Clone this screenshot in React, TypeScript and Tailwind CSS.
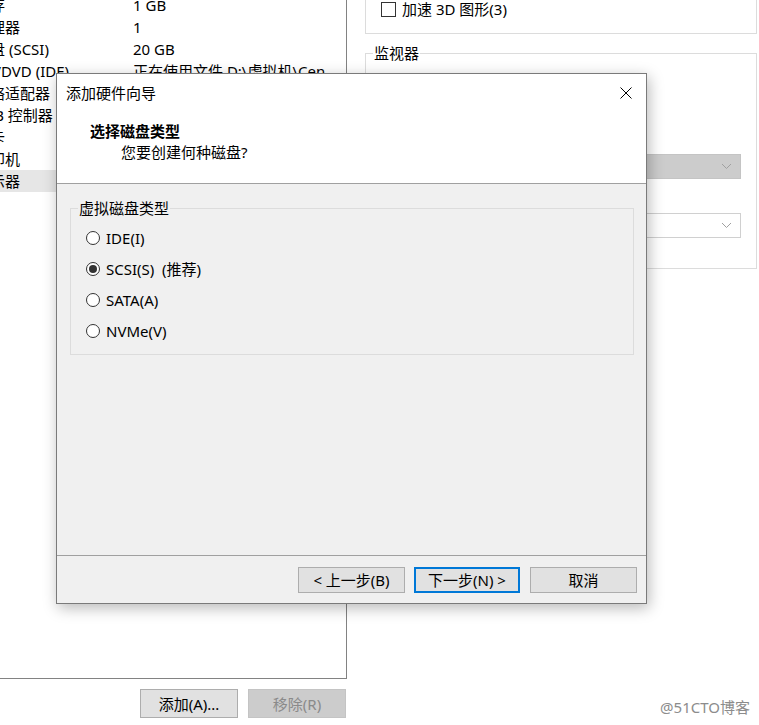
import React from "react";

const rows = [
  { name: "内存", value: "1 GB" },
  { name: "处理器", value: "1" },
  { name: "硬盘 (SCSI)", value: "20 GB" },
  { name: "CD/DVD (IDE)", value: "正在使用文件 D:\\虚拟机\\CentOS7.iso" },
  { name: "网络适配器", value: "" },
  { name: "USB 控制器", value: "" },
  { name: "声卡", value: "" },
  { name: "打印机", value: "" },
  { name: "显示器", value: "", selected: true },
];

const diskTypes = [
  { label: "IDE(I)", checked: false },
  { label: "SCSI(S)  (推荐)", checked: true },
  { label: "SATA(A)", checked: false },
  { label: "NVMe(V)", checked: false },
];

const Chevron = () => (
  <svg width="11" height="7" viewBox="0 0 11 7" fill="none">
    <path d="M1 1l4.5 4.5L10 1" stroke="#a0a0a0" strokeWidth="1" />
  </svg>
);

const Radio = ({ checked }: { checked: boolean }) => (
  <span className="flex h-[14px] w-[14px] items-center justify-center rounded-full border border-[#333] bg-white">
    {checked && <span className="h-[8px] w-[8px] rounded-full bg-[#333]" />}
  </span>
);

const App = () => {
  return (
    <div className="relative flex h-[725px] w-[759px] overflow-hidden bg-white font-['Noto_Sans','Noto_Sans_CJK_SC',sans-serif] text-[15px] leading-[20px] text-black">
      {/* left: hardware list, scrolled so the names are cut at the left */}
      <div className="flex w-[347px] shrink-0 flex-col">
        <div className="h-[679px] overflow-hidden border-r border-b border-[#828282]">
          <div className="-mt-[6px]">
            {rows.map((r) => (
              <div
                key={r.name}
                className={`flex h-[22px] items-center whitespace-nowrap ${
                  r.selected ? "bg-[#e6e6e6]" : ""
                }`}
              >
                <span className="-ml-[25px] w-[158px] shrink-0">{r.name}</span>
                <span className="w-[192px] shrink-0 overflow-hidden">{r.value}</span>
              </div>
            ))}
          </div>
        </div>
        <div className="mt-[10px] flex justify-end gap-[10px] pr-[1px]">
          <button className="h-[29px] w-[98px] border border-[#adadad] bg-[#e1e1e1] text-[15px]">
            添加(A)...
          </button>
          <button className="h-[29px] w-[98px] border border-[#c4c4c4] bg-[#cccccc] text-[15px] text-[#8a8a8a]">
            移除(R)
          </button>
        </div>
      </div>

      {/* right: display settings */}
      <div className="ml-[18px] flex w-[392px] flex-col">
        <div className="-mt-[21px] h-[55px] border border-[#dcdcdc] pt-[19px] pl-[15px]">
          <div className="flex items-center gap-[6px]">
            <span className="h-[15px] w-[15px] border border-[#333] bg-white" />
            <span>加速 3D 图形(3)</span>
          </div>
        </div>
        <fieldset className="mt-[9px] h-[226px] border border-[#dcdcdc] px-[15px]">
          <legend className="-ml-[8px] px-[1px] leading-[20px]">监视器</legend>
          <div className="mt-[91px] ml-[10px] flex h-[25px] items-center justify-end border border-[#c4c4c4] bg-[#cccccc] pr-[8px]">
            <Chevron />
          </div>
          <div className="mt-[34px] ml-[10px] flex h-[25px] items-center justify-end border border-[#d0d0d0] bg-white pr-[8px]">
            <Chevron />
          </div>
        </fieldset>
      </div>

      {/* wizard dialog */}
      <div className="absolute top-[73px] left-[56px] flex h-[531px] w-[591px] flex-col border border-[#7a7a7a] bg-white shadow-[2px_4px_14px_rgba(0,0,0,0.28)]">
        <div className="flex h-[38px] items-center justify-between pr-[14px] pl-[9px]">
          <span>添加硬件向导</span>
          <svg width="12" height="12" viewBox="0 0 12 12">
            <path d="M0.5 0.5l11 11M11.5 0.5l-11 11" stroke="#000" strokeWidth="1" />
          </svg>
        </div>
        <div className="h-[72px] border-b border-[#a0a0a0] pt-[9px]">
          <div className="pl-[33px] font-bold">选择磁盘类型</div>
          <div className="mt-[1px] pl-[64px]">您要创建何种磁盘?</div>
        </div>
        <div className="flex-1 bg-[#f0f0f0] pt-[14px] pr-[12px] pl-[13px]">
          <fieldset className="border border-[#dcdcdc] pt-[4px] pb-[8px] pl-[15px]">
            <legend className="-ml-[8px] px-[1px]">虚拟磁盘类型</legend>
            {diskTypes.map((d) => (
              <div key={d.label} className="flex h-[31px] items-center gap-[6px] whitespace-pre">
                <Radio checked={d.checked} />
                <span>{d.label}</span>
              </div>
            ))}
          </fieldset>
        </div>
        <div className="flex h-[48px] justify-end border-t border-[#a0a0a0] bg-[#f0f0f0] pt-[11px] pr-[9px]">
          <button className="mr-[9px] h-[26px] w-[107px] border border-[#adadad] bg-[#e1e1e1]">
            &lt; 上一步(B)
          </button>
          <button className="mr-[10px] h-[26px] w-[106px] border-2 border-[#0078d7] bg-[#e1e1e1]">
            下一步(N) &gt;
          </button>
          <button className="h-[26px] w-[107px] border border-[#adadad] bg-[#e1e1e1]">
            取消
          </button>
        </div>
      </div>

      {/* watermark */}
      <div className="absolute top-[697px] right-[9px] text-[15px] text-[#8c8c8c]">@51CTO博客</div>
    </div>
  );
};

export default App;
